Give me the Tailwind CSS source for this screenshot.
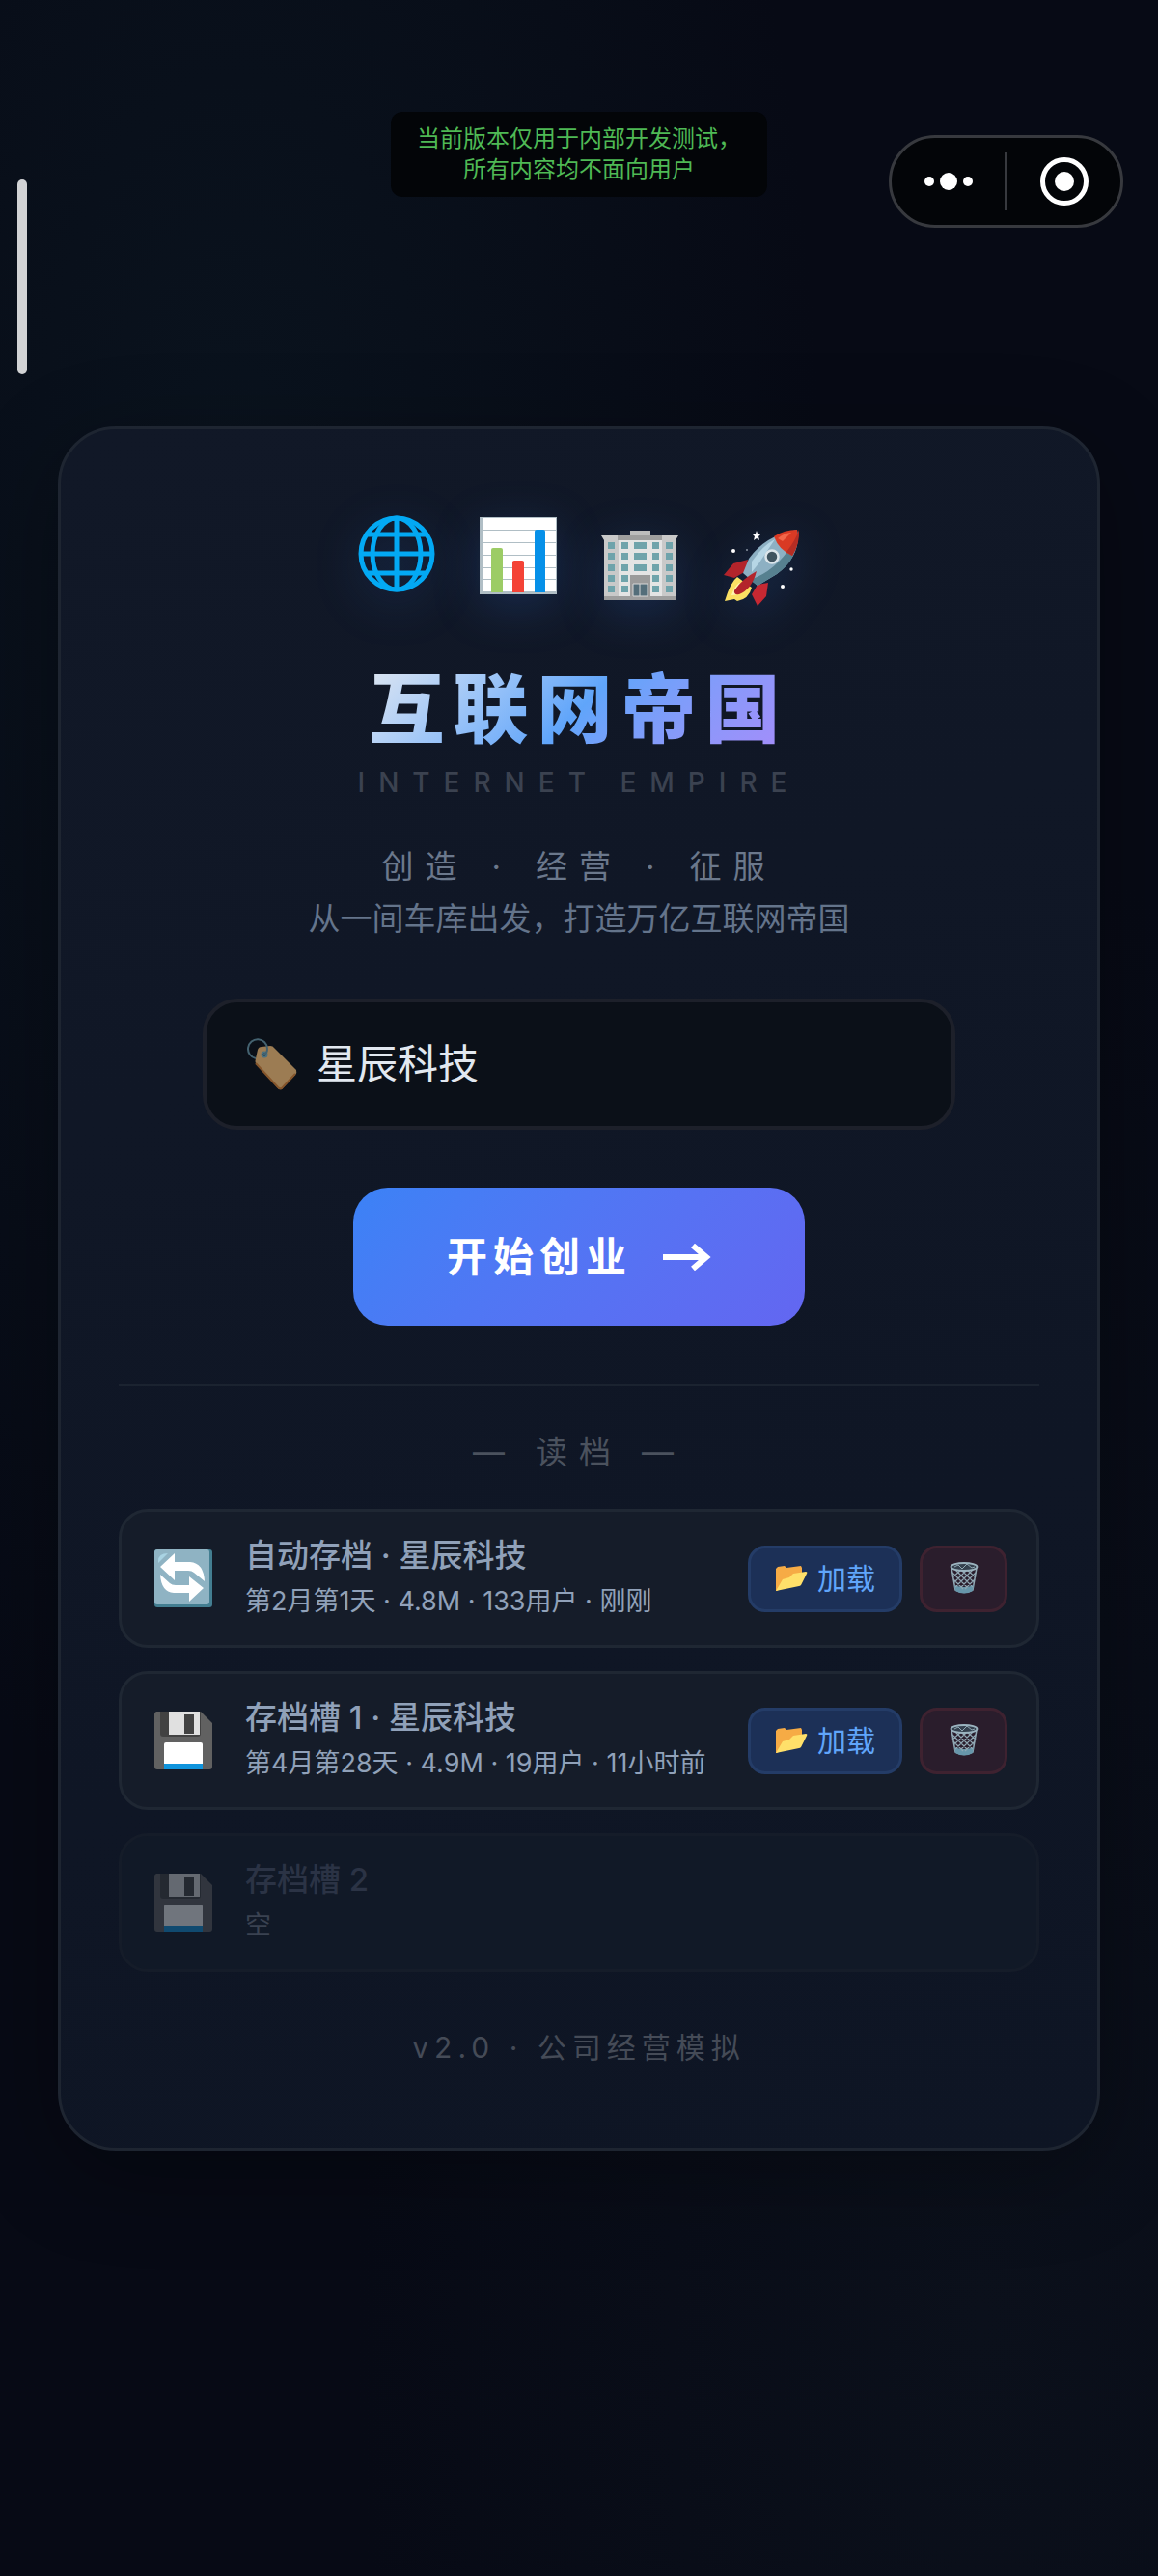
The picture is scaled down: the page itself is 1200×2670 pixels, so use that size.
<!DOCTYPE html>
<html lang="zh-CN">
<head>
  <meta charset="UTF-8">
  <meta name="viewport" content="width=device-width, initial-scale=1.0">
  <title>互联网帝国</title>
  <script src="https://cdn.jsdelivr.net/npm/@tailwindcss/browser@4"></script>
</head>
<body class="bg-[#070a15] font-[Inter,'Noto_Sans_CJK_SC',sans-serif]">

  <!-- Shared icons -->
  <svg class="hidden">
    <symbol id="icon-floppy" viewBox="0 0 60 60">
      <path d="M2 0h46l12 12v45a3 3 0 0 1-3 3H3a3 3 0 0 1-3-3V3a3 3 0 0 1 2-3z" fill="#616161"/>
      <path d="M6 0h42v23a3 3 0 0 1-3 3H9a3 3 0 0 1-3-3z" fill="#424242"/>
      <path d="M15 0h32v24H15z" fill="#e0e0e0"/>
      <path d="M31 3h10v20H31z" fill="#424242"/>
      <path d="M10 34a2 2 0 0 1 2-2h36a2 2 0 0 1 2 2v20H10z" fill="#fff"/>
      <path d="M10 54h40v6H10z" fill="#0f94dd"/>
    </symbol>
    <symbol id="icon-folder" viewBox="0 0 34 28">
      <path d="M1 4l2-2 7-1 2 2 15-2 1 2v10L2 27H1z" fill="#f6ab45"/>
      <path d="M1 27l7-12 7-2 4-4 13-2q2 0 1 2l-6 12q-1 1-2 1z" fill="#ffe06a"/>
    </symbol>
    <symbol id="icon-trash" viewBox="0 0 30 34">
      <path d="M2 6l4 23q9 5 18 0l4-23" fill="none" stroke="#90a7b3" stroke-width="1.5"/>
      <path d="M5 24q10 4 20 0l-1 6q-9 5-18 0z" fill="#6796aa"/>
      <path d="M3 11l15 15M4 18l10 10M6 8l18 18M12 8l13 13M18 8l9 8M27 11L12 26M26 18L16 28M24 8L6 26M18 8L5 21M12 8l-9 8" fill="none" stroke="#90a7b3" stroke-width="1.2"/>
      <ellipse cx="15" cy="5" rx="13.5" ry="4" fill="#35414f" stroke="#9bb3bf" stroke-width="1.8"/>
      <path d="M5 5l4-2 4 4 5-5 5 4 3-1" fill="none" stroke="#90a7b3"/>
    </symbol>
  </svg>

  <div id="app" class="relative flex min-h-screen flex-col bg-[radial-gradient(ellipse_at_20%_20%,#0a131e_0%,transparent_45%),radial-gradient(ellipse_at_85%_90%,#0b101b_0%,transparent_45%)] px-15 pt-[116px]">

    <!-- Status overlay -->
    <div class="absolute top-[186px] left-[18px] h-[202px] w-[10px] rounded-full bg-[#d2d3d5]"></div>
    <p class="mx-auto rounded-xl bg-[#030508] px-[27px] py-3 text-center text-2xl leading-8 text-[#4fb955]">当前版本仅用于内部开发测试，<br>所有内容均不面向用户</p>
    <div class="absolute top-[140px] right-9 flex h-24 w-[243px] items-center rounded-full border-3 border-[#37393e] bg-[#030508]">
      <button class="flex flex-1 justify-center" aria-label="菜单">
        <svg width="52" height="20" viewBox="0 0 52 20" fill="#fff"><circle cx="6" cy="10" r="5"/><circle cx="26" cy="10" r="9"/><circle cx="46" cy="10" r="5"/></svg>
      </button>
      <div class="h-15 w-[3px] bg-[#37393e]"></div>
      <button class="flex flex-1 justify-center" aria-label="关闭">
        <svg width="50" height="50" viewBox="0 0 50 50"><circle cx="25" cy="25" r="22.5" fill="none" stroke="#fff" stroke-width="5"/><circle cx="25" cy="25" r="10" fill="#fff"/></svg>
      </button>
    </div>

    <!-- Main card -->
    <main class="mt-[238px] flex flex-col items-center rounded-[60px] border-3 border-[#1e2531] bg-linear-160 from-[#111827] to-[#0e1524] px-15 pt-[89px] shadow-[0_24px_96px_#00000050]">

      <div class="flex items-start gap-[46px]">
        <svg class="size-20 drop-shadow-[0_12px_24px_#3b82f630]" viewBox="0 0 80 80" fill="none" stroke="#03a9f4" stroke-width="5">
          <circle cx="40" cy="40" r="37"/><ellipse cx="40" cy="40" rx="25" ry="37"/>
          <path d="M40 3v74M3 40h74M9 20h62M9 60h62"/>
        </svg>
        <svg class="mt-[2px] size-20 drop-shadow-[0_12px_24px_#3b82f630]" viewBox="0 0 80 80">
          <path d="M0 0h80v80H0z" fill="#b0bec5"/>
          <path d="M3 1h76v12H3zM3 14h76v12H3zM3 27h76v12H3zM3 40h76v12H3zM3 53h76v11H3zM3 65h76v12H3z" fill="#fff"/>
          <path d="M12 34q0-2 2-2h8q2 0 2 2v44H12z" fill="#9ccc65"/>
          <path d="M34 47q0-2 2-2h8q2 0 2 2v31H34z" fill="#f44336"/>
          <path d="M57 15q0-2 2-2h7q2 0 2 2v63H57z" fill="#0690e8"/>
        </svg>
        <svg class="mt-[10px] size-20 drop-shadow-[0_12px_24px_#3b82f630]" viewBox="0 0 80 80">
          <path d="M30 6h21v8H30z" fill="#bdbdbd"/>
          <path d="M0 11h80l-3 5v62H3V16z" fill="#c9c9c9"/>
          <path d="M17 11h46v5H17z" fill="#9e9e9e"/>
          <path d="M18 16h45v58H18z" fill="#e4e4e4"/>
          <path d="M3 74h75v4H3z" fill="#9e9e9e"/>
          <path d="M7 18h7v7H7zM21 18h7v7h-7zM34 18h13v7H34zM53 18h7v7h-7zM67 18h7v7h-7zM7 29h7v7H7zM21 29h7v7h-7zM34 29h13v7H34zM53 29h7v7h-7zM67 29h7v7h-7zM7 41h7v7H7zM21 41h7v7h-7zM34 41h13v7H34zM53 41h7v7h-7zM67 41h7v7h-7zM7 52h7v7H7zM21 52h7v7h-7zM53 52h7v7h-7zM67 52h7v7h-7zM7 63h7v7H7zM21 63h7v7h-7zM53 63h7v7h-7zM67 63h7v7h-7z" fill="#6fa3ab"/>
          <path d="M30 52h21v22H30z" fill="#9b9b9b"/>
          <path d="M33 61h15v13H33z" fill="#546e7a" stroke="#d6d6d6"/>
          <path d="M40 61v13" stroke="#d6d6d6"/>
        </svg>
        <svg class="mt-[14px] size-20 drop-shadow-[0_12px_24px_#3b82f630]" viewBox="0 0 80 80">
          <path d="M26 32l-15 4L1 48l11 3 12-7z" fill="#b3242b"/>
          <path d="M47 56l-2 14-9 10-6-12 6-10z" fill="#c62832"/>
          <path d="M15 50q-7 5-13 25l10-2 3 2q12-2 15-14z" fill="#fbe063"/>
          <path d="M17 56q-5 4-8 13 10 0 14-8z" fill="#fff6b0"/>
          <path d="M27 31Q44 7 77 1q5 26-21 46L36 59 21 46z" fill="#8db0c3"/>
          <path d="M36 59l-8-6Q55 44 72 16l4-3q0 20-20 34z" fill="#56808f"/>
          <path d="M30 34Q42 17 54 11L38 35l-8 10z" fill="#b6d6e5"/>
          <path d="M53 8Q64 1 77 1q3 13-5 27Q58 22 53 8z" fill="#d93a24"/>
          <path d="M79 1q1 15-7 27l-6-4Q75 13 79 1z" fill="#b52d24"/>
          <path d="M57 10q7-6 14-6l-9 9z" fill="#f2674a"/>
          <path d="M35 44q-15 8-23 20-1 5 5 4 13-5 18-24z" fill="#b3242b"/>
          <circle cx="51" cy="29" r="6.5" fill="#3f545f" stroke="#dbe5ea" stroke-width="2.5"/>
          <path d="M35 2l1 3h4l-3 3 1 4-3-2-3 2 1-4-3-3h4z" fill="#fff"/>
          <circle cx="11" cy="23" r="2" fill="#fff"/><circle cx="71" cy="42" r="1.7" fill="#fff"/><circle cx="62" cy="60" r="2" fill="#fff"/><circle cx="25" cy="22" r="1" fill="#8a93a0"/>
        </svg>
      </div>

      <h1 class="mt-14 bg-linear-135 from-[#e2e8f0] via-[#60a5fa] to-[#a78bfa] bg-clip-text text-[78px] leading-[104px] font-black tracking-[9px] text-transparent">互联网帝国</h1>
      <p class="mt-[6px] text-[28px] leading-[34px] font-medium tracking-[14px] text-[#3b4250]">INTERNET EMPIRE</p>

      <p class="mt-[43px] flex gap-6 text-[33px] leading-[54px] tracking-[12px] text-[#6b788c]"><span>创造</span><span>·</span><span>经营</span><span>·</span><span>征服</span></p>
      <p class="text-[33px] leading-[54px] text-[#64748b]">从一间车库出发，打造万亿互联网帝国</p>

      <label class="mt-14 flex h-[136px] w-[780px] items-center gap-5 rounded-[36px] border-4 border-[#1d202a] bg-[#0b1018] px-[42px]">
        <svg class="h-[54px] w-[52px] shrink-0" viewBox="0 0 52 54">
          <path d="M11 12q1-3 4-3l9-1q3 0 4 2l23 23q1 3-1 5L36 53q-3 1-4-1L9 26q-1-2 0-5z" fill="#9c7c53"/>
          <path d="M50 37L36 52q-2 1-4-1L9 26" fill="none" stroke="#85552b" stroke-width="2"/>
          <circle cx="18" cy="17" r="2.5" fill="#0b2632" stroke="#4a7180" stroke-width="2"/>
          <path d="M9 21A10 10 0 1 1 21 11q0 5-4 6" fill="none" stroke="#446270" stroke-width="2"/>
        </svg>
        <input type="text" value="星辰科技" aria-label="公司名称" class="w-full bg-transparent text-[42px] leading-[60px] text-slate-200 outline-none">
      </label>

      <button class="mt-[60px] flex h-[143px] w-[468px] items-center justify-center gap-8 rounded-[36px] bg-linear-135 from-[#3b82f6] to-[#6366f1] text-[42px] font-bold tracking-[6px] text-white">
        <span>开始创业</span>
        <svg width="50" height="28" viewBox="0 0 50 28"><path d="M0 14h44M31 2l14 12-14 12" fill="none" stroke="#fff" stroke-width="6"/></svg>
      </button>

      <!-- Save slots -->
      <section class="mt-[60px] w-full border-t-3 border-[#1b2330] pt-[43px]">
        <h2 class="flex justify-center gap-5 text-[33px] leading-[50px] tracking-[12px] text-[#4b525e]"><span>—</span><span>读档</span><span>—</span></h2>
        <ul class="mt-[34px] flex flex-col gap-6">
          <li class="flex h-36 items-center gap-[34px] rounded-[30px] border-3 border-[#1f2733] bg-[#151c29] pr-[30px] pl-[34px]">
            <svg class="size-15 shrink-0" viewBox="0 0 60 60">
              <rect width="60" height="60" rx="3" fill="#437e91"/><rect width="57" height="57" rx="3" fill="#8fb3c3"/>
              <path d="M4 12q0-8 10-8L4 14z" fill="#a9d3e3"/>
              <path d="M6 18L21 4v9h16q14 1 15 20L41 24q-2-2-6-2H21v10z" fill="#fff"/>
              <path d="M51 40L36 54v-9H20Q7 44 6 26l10 9q2 2 6 2h14V28z" fill="#fff"/>
            </svg>
            <div class="flex-1">
              <h3 class="text-[33px] leading-[48px] font-medium text-slate-400">自动存档 · 星辰科技</h3>
              <p class="text-[27px] leading-[48px] whitespace-nowrap text-slate-400">第2月第1天 · 4.8M · 133用户 · 刚刚</p>
            </div>
            <div class="flex gap-[18px]">
              <button class="flex h-[69px] w-40 items-center justify-center gap-[10px] rounded-[18px] border-3 border-[#243c67] bg-[#1c3057] text-[30px] text-[#60a5fa]"><svg class="h-7 w-[34px]"><use href="#icon-folder"/></svg>加载</button>
              <button class="flex h-[69px] w-[91px] items-center justify-center rounded-[18px] border-3 border-[#3e2230] bg-[#2a1d2c]" aria-label="删除"><svg class="h-[34px] w-[30px]"><use href="#icon-trash"/></svg></button>
            </div>
          </li>
          <li class="flex h-36 items-center gap-[34px] rounded-[30px] border-3 border-[#1f2733] bg-[#151c29] pr-[30px] pl-[34px]">
            <svg class="size-15 shrink-0"><use href="#icon-floppy"/></svg>
            <div class="flex-1">
              <h3 class="text-[33px] leading-[48px] font-medium text-slate-400">存档槽 1 · 星辰科技</h3>
              <p class="text-[27px] leading-[48px] whitespace-nowrap text-slate-400">第4月第28天 · 4.9M · 19用户 · 11小时前</p>
            </div>
            <div class="flex gap-[18px]">
              <button class="flex h-[69px] w-40 items-center justify-center gap-[10px] rounded-[18px] border-3 border-[#243c67] bg-[#1c3057] text-[30px] text-[#60a5fa]"><svg class="h-7 w-[34px]"><use href="#icon-folder"/></svg>加载</button>
              <button class="flex h-[69px] w-[91px] items-center justify-center rounded-[18px] border-3 border-[#3e2230] bg-[#2a1d2c]" aria-label="删除"><svg class="h-[34px] w-[30px]"><use href="#icon-trash"/></svg></button>
            </div>
          </li>
          <li class="flex h-36 items-center gap-[34px] rounded-[30px] border-3 border-[#151c29] bg-[#111927] pr-[30px] pl-[34px]">
            <svg class="size-15 shrink-0 opacity-40"><use href="#icon-floppy"/></svg>
            <div class="flex-1">
              <h3 class="text-[33px] leading-[48px] font-medium text-[#2b3345]">存档槽 2</h3>
              <p class="text-[27px] leading-[48px] text-[#3a4251]">空</p>
            </div>
          </li>
        </ul>
      </section>

      <footer class="mt-[54px] pb-[80px] text-[30px] leading-[48px] tracking-[6px] text-[#454b57]">v2.0 · 公司经营模拟</footer>
    </main>
  </div>
</body>
</html>
